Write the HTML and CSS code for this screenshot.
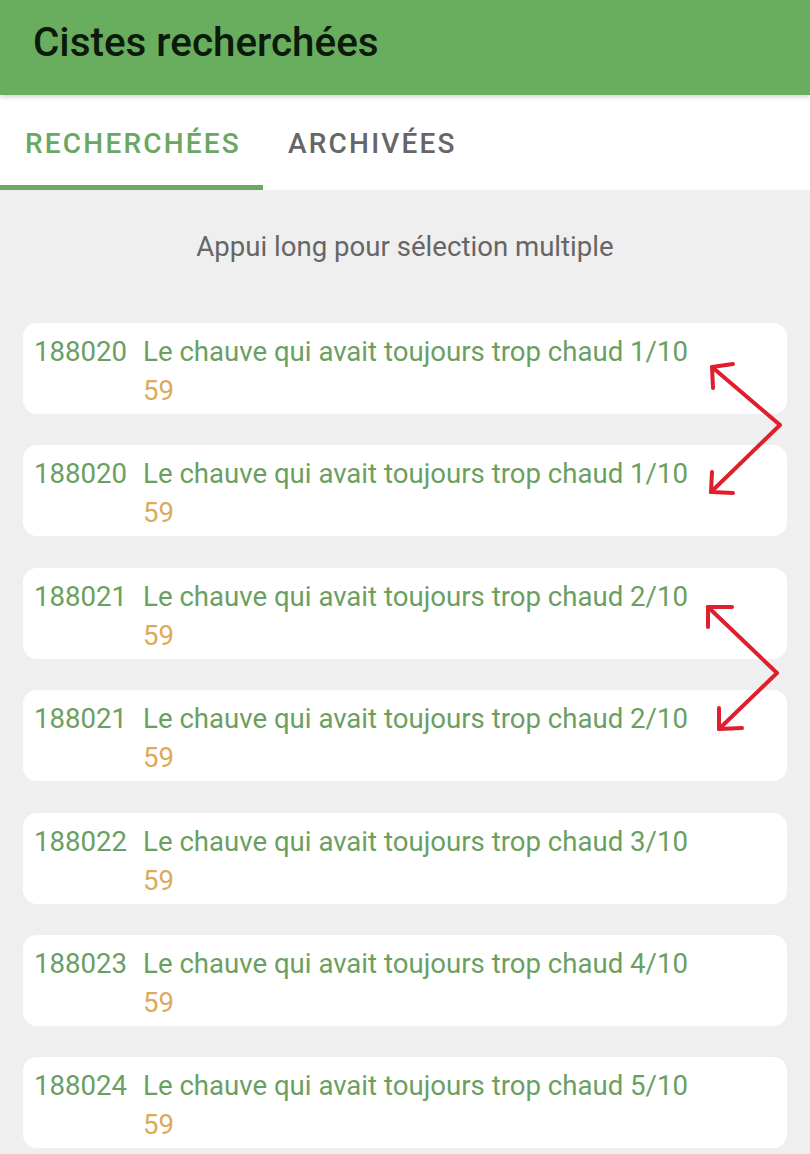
FILE: index.html
```html
<!DOCTYPE html>
<html lang="fr">
<head>
    <meta charset="UTF-8">
    <meta name="viewport" content="width=device-width, initial-scale=1.0">
    <title>Cistes recherchées</title>
    <link rel="stylesheet" href="styles.css">
</head>
<body>
    <header class="app-bar">
        <h1 class="app-title">Cistes recherchées</h1>
    </header>

    <nav class="tabs">
        <div class="tab active">RECHERCHÉES</div>
        <div class="tab">ARCHIVÉES</div>
    </nav>

    <main class="content">
        <p class="hint">Appui long pour sélection multiple</p>

        <ul class="list">
            <li class="item">
                <span class="item-id">188020</span>
                <div class="item-body">
                    <span class="item-title">Le chauve qui avait toujours trop chaud 1/10</span>
                    <span class="item-dept">59</span>
                </div>
            </li>
            <li class="item">
                <span class="item-id">188020</span>
                <div class="item-body">
                    <span class="item-title">Le chauve qui avait toujours trop chaud 1/10</span>
                    <span class="item-dept">59</span>
                </div>
            </li>
            <li class="item">
                <span class="item-id">188021</span>
                <div class="item-body">
                    <span class="item-title">Le chauve qui avait toujours trop chaud 2/10</span>
                    <span class="item-dept">59</span>
                </div>
            </li>
            <li class="item">
                <span class="item-id">188021</span>
                <div class="item-body">
                    <span class="item-title">Le chauve qui avait toujours trop chaud 2/10</span>
                    <span class="item-dept">59</span>
                </div>
            </li>
            <li class="item">
                <span class="item-id">188022</span>
                <div class="item-body">
                    <span class="item-title">Le chauve qui avait toujours trop chaud 3/10</span>
                    <span class="item-dept">59</span>
                </div>
            </li>
            <li class="item">
                <span class="item-id">188023</span>
                <div class="item-body">
                    <span class="item-title">Le chauve qui avait toujours trop chaud 4/10</span>
                    <span class="item-dept">59</span>
                </div>
            </li>
            <li class="item">
                <span class="item-id">188024</span>
                <div class="item-body">
                    <span class="item-title">Le chauve qui avait toujours trop chaud 5/10</span>
                    <span class="item-dept">59</span>
                </div>
            </li>
        </ul>

        <!-- red annotation arrows drawn over the list -->
        <svg class="marks" width="810" height="1154" viewBox="0 0 810 1154">
            <g fill="none" stroke="#e01f2d" stroke-width="4" stroke-linecap="round" stroke-linejoin="round">
                <polyline points="712,367 780,425 711,492"/>
                <polyline points="733,364 712,367 713,388"/>
                <polyline points="712,472 711,492 733,493"/>
                <polyline points="708,607 777,673 719,729"/>
                <polyline points="732,607 708,607 708,627"/>
                <polyline points="719,708 719,729 742,728"/>
            </g>
        </svg>
    </main>
</body>
</html>
```

FILE: styles.css
```css
body {
    margin: 0;
    padding: 0;
    font-family: Roboto, 'Noto Sans', sans-serif;
    background: #efefef;
    width: 810px;
    height: 1154px;
    overflow: hidden;
}
.app-bar {
    height: 95px;
    background: #69ad5f;
    display: flex;
    align-items: center;
    padding: 0 33px;
    position: relative;
    z-index: 2;
    box-shadow: 0 2px 5px rgba(0, 0, 0, 0.18);
}
.app-title {
    margin: 0 0 10px 0;
    font-size: 40.4px;
    font-weight: 500;
    color: #0c1a0b;
}
.tabs {
    height: 95px;
    background: #ffffff;
    display: flex;
    position: relative;
    z-index: 1;
}
.tab {
    box-sizing: border-box;
    height: 95px;
    display: flex;
    align-items: center;
    padding: 6px 24px 0 25px;
    font-size: 28px;
    font-weight: 500;
    letter-spacing: 2.2px;
    color: #666666;
    border-bottom: 5px solid transparent;
}
.tab.active {
    width: 263px;
    color: #6aa761;
    border-bottom-color: #6aa761;
}
.content {
    position: relative;
}
.hint {
    margin: 0;
    padding: 40px 0 0 0;
    text-align: center;
    font-size: 27.6px;
    color: #666666;
    height: 91px;
    box-sizing: border-box;
}
.list {
    list-style: none;
    margin: 0;
    padding: 42px 23px 0 23px;
    display: flex;
    flex-direction: column;
    gap: 31.4px;
}
.item {
    background: #ffffff;
    border-radius: 14px;
    height: 91px;
    box-sizing: border-box;
    padding: 12px 11px 0 11px;
    display: flex;
    gap: 16px;
    color: #6b9f62;
    font-size: 27.6px;
}
.item-body {
    display: flex;
    flex-direction: column;
}
.item-title,
.item-id {
    line-height: 34px;
}
.item-dept {
    color: #dcaa58;
    line-height: 34px;
    margin-top: 5px;
}
.marks {
    position: absolute;
    left: 0;
    top: -190px;
    pointer-events: none;
}
```
